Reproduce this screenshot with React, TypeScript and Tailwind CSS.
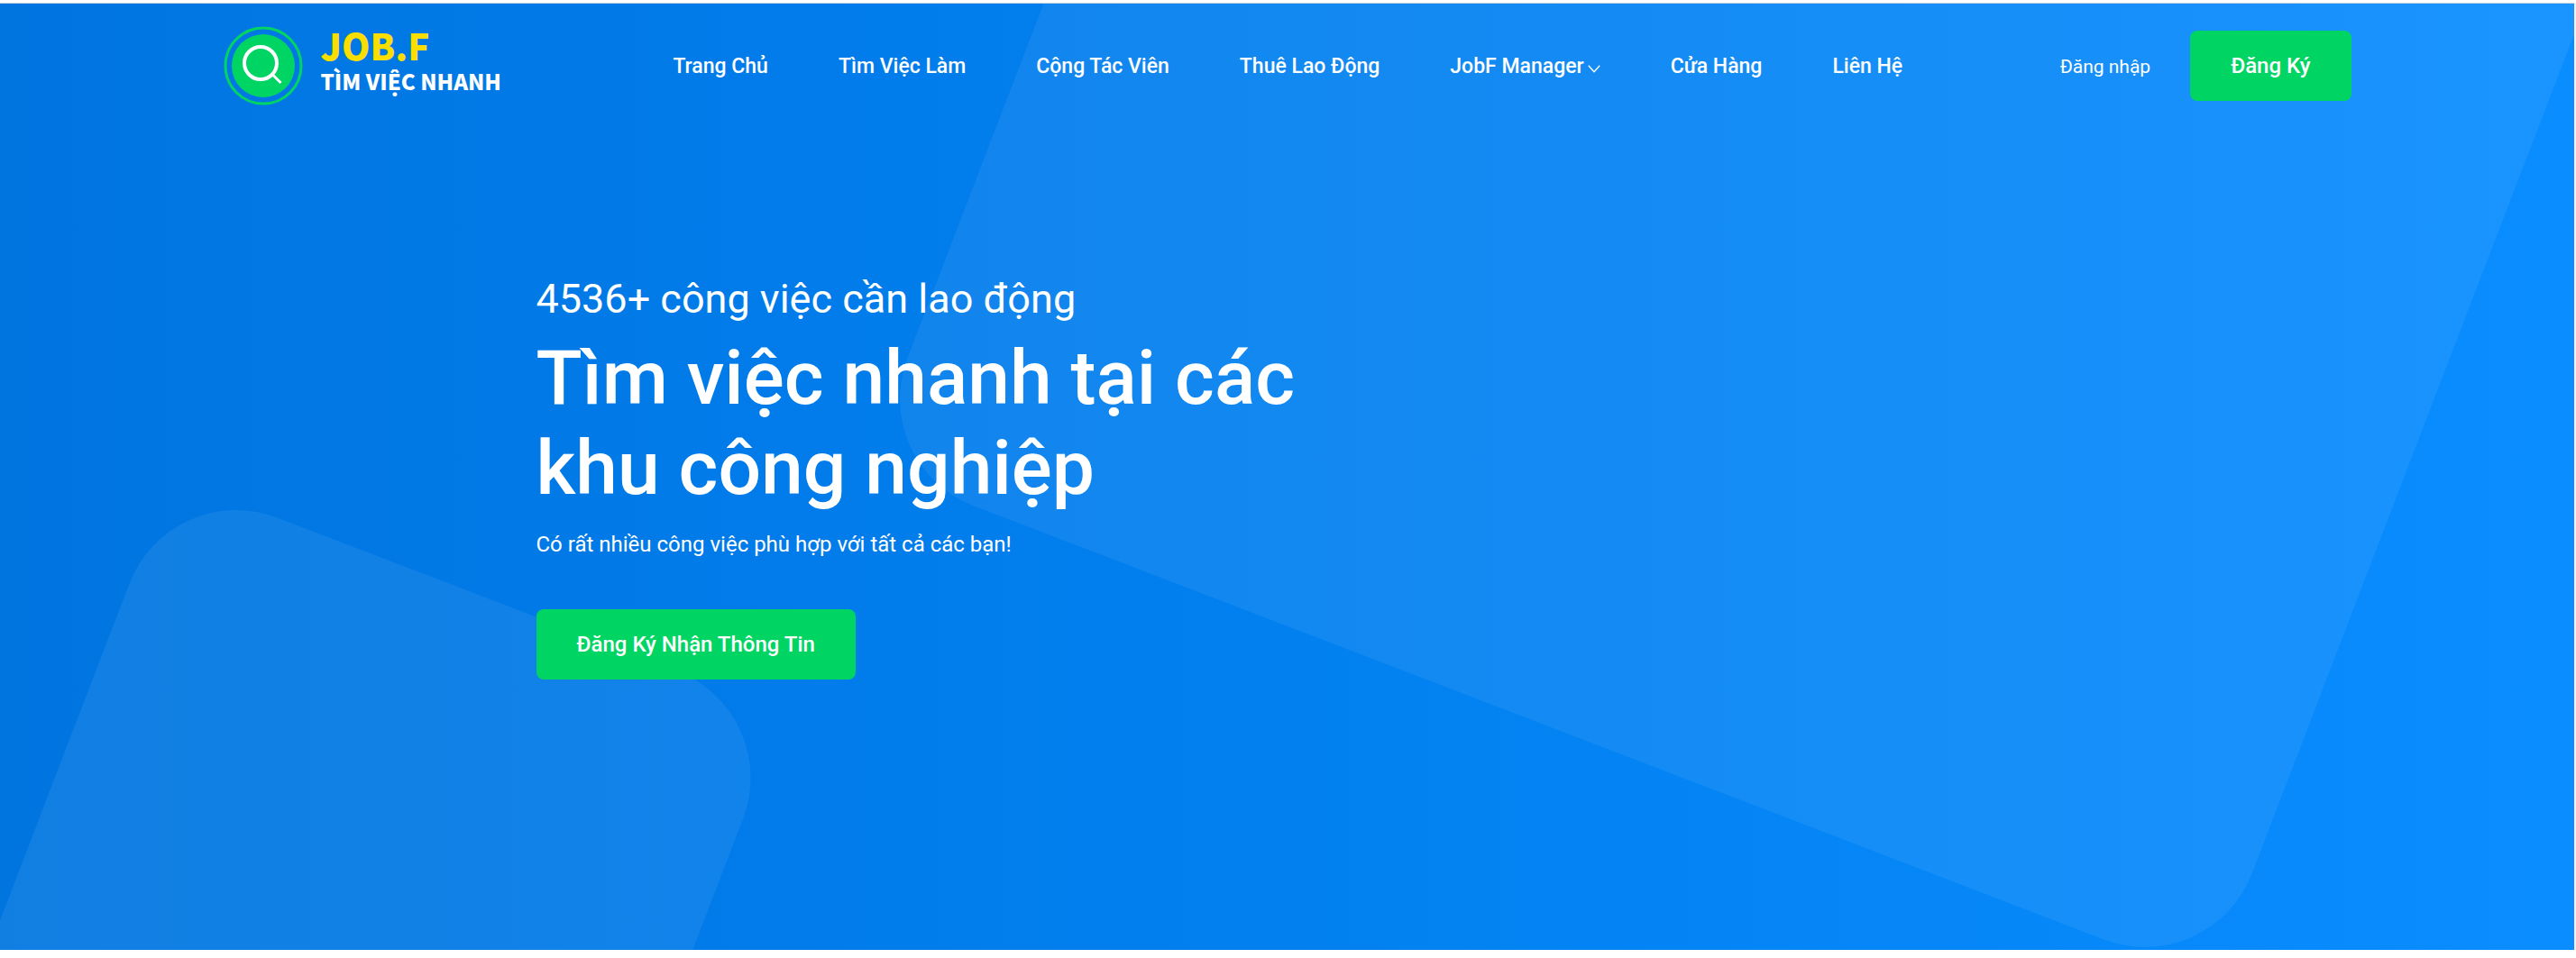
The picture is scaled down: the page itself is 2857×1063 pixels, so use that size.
import React from "react";

const navItems = [
  { label: "Trang Chủ" },
  { label: "Tìm Việc Làm" },
  { label: "Cộng Tác Viên" },
  { label: "Thuê Lao Động" },
  { label: "JobF Manager", hasMenu: true },
  { label: "Cửa Hàng" },
  { label: "Liên Hệ" },
];

function Logo() {
  return (
    <a href="#" className="flex shrink-0 items-center gap-5 pr-4">
      <svg className="size-[88px]" viewBox="0 0 88 88" fill="none" aria-hidden="true">
        <circle cx="44" cy="44" r="42" stroke="#00d563" strokeWidth="3" />
        <circle cx="44" cy="44" r="35" fill="#00d563" />
        <circle cx="41" cy="41" r="18" stroke="#fff" strokeWidth="4" />
        <path d="M54 53.5 L63.5 63" stroke="#fff" strokeWidth="3" />
      </svg>
      <span className="flex flex-col pb-2 font-['Noto_Sans_CJK_SC','Open_Sans',sans-serif]">
        <span className="text-[40px] leading-[42px] font-black text-[#fade00]">JOB.F</span>
        <span className="text-[24px] leading-[38px] font-black text-white">TÌM VIỆC NHANH</span>
      </span>
    </a>
  );
}

function BackgroundShapes() {
  return (
    <svg
      className="absolute inset-0 size-full"
      viewBox="0 0 2855 1050"
      preserveAspectRatio="xMidYMid slice"
      fill="#fff"
      fillOpacity="0.066"
      aria-hidden="true"
    >
      <g transform="translate(0 -4) rotate(21)">
        <rect x="1082" y="-1460" width="1597" height="1597" rx="127" />
        <rect x="366" y="426" width="729" height="729" rx="127" />
      </g>
    </svg>
  );
}

export default function App() {
  return (
    <div className="bg-white pt-[3px] pb-[9px] font-['Roboto',sans-serif] text-white">
      <div className="border-r-2 border-[#f1f1f1]">
        <div className="relative min-h-[1051px] overflow-hidden border-t border-[#c8d3e0] bg-linear-to-r from-[#0075e0] via-[#0280f0] to-[#0a8dff]">
          <BackgroundShapes />
          <div className="relative mx-auto w-full max-w-[2360px]">
            <header className="flex items-center justify-between pt-[25px]">
              <Logo />
              <nav className="flex items-center gap-[78px] pt-0.5">
                {navItems.map((item) => (
                  <a
                    key={item.label}
                    href="#"
                    className="flex items-center gap-1 text-[23px] leading-8 font-medium whitespace-nowrap"
                  >
                    {item.label}
                    {item.hasMenu && (
                      <svg className="mt-1 h-[9px] w-3.5" viewBox="0 0 14 9" fill="none" stroke="#fff" strokeWidth="1.4" aria-hidden="true">
                        <path d="M0.8 0.8 L7 7.8 L13.2 0.8" />
                      </svg>
                    )}
                  </a>
                ))}
              </nav>
              <div className="flex items-center gap-11">
                <a href="#" className="pt-0.5 text-[21px] leading-8 whitespace-nowrap">
                  Đăng nhập
                </a>
                <button
                  type="button"
                  className="h-[78px] rounded-lg bg-[#00d563] px-[45px] text-[24px] leading-8 font-medium whitespace-nowrap"
                >
                  Đăng Ký
                </button>
              </div>
            </header>

            <main className="ml-[347px] flex max-w-[900px] flex-col items-start pt-[185px]">
              <p className="text-[45px] leading-[60px]">4536+ công việc cần lao động</p>
              <h1 className="mt-2 text-[84px] leading-[100px] font-medium">
                Tìm việc nhanh tại các khu công nghiệp
              </h1>
              <p className="mt-4 text-[24px] leading-9">Có rất nhiều công việc phù hợp với tất cả các bạn!</p>
              <button
                type="button"
                className="mt-[54px] h-[78px] rounded-lg bg-[#00d563] px-[45px] text-[24px] leading-8 font-medium whitespace-nowrap"
              >
                Đăng Ký Nhận Thông Tin
              </button>
            </main>
          </div>
        </div>
      </div>
    </div>
  );
}
